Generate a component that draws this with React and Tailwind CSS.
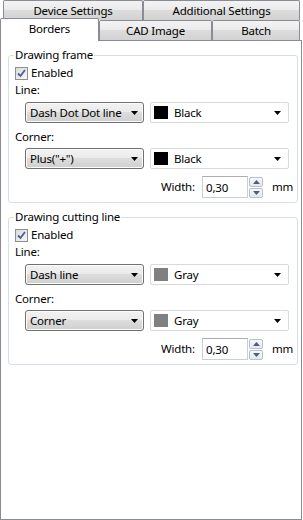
import React from "react";

const font = { fontFamily: '"Noto Sans", "Open Sans", Arial, sans-serif', letterSpacing: "-0.2px" };

function Tab({ label, w, selected }) {
  if (selected) {
    return (
      <div
        className={`relative z-10 -mt-[2px] h-[23px] shrink-0 border-x border-t border-[#898c95] bg-white flex items-start justify-center pt-[1px] text-[11.5px] text-black rounded-t-[2px]`}
        style={{ width: w }}
      >
        {label}
      </div>
    );
  }
  return (
    <div
      className="h-[20px] shrink-0 border-x border-t border-[#898c95] bg-[linear-gradient(#f3f3f3,#ebebeb_45%,#dcdcdc_50%,#d2d2d2)] flex items-center justify-center text-[11.5px] text-black rounded-t-[2px]"
      style={{ width: w }}
    >
      {label}
    </div>
  );
}

function Arrow() {
  return (
    <svg width="7" height="4" viewBox="0 0 7 4" className="shrink-0">
      <path d="M0 0H7L3.5 4Z" fill="#000" />
    </svg>
  );
}

function Checkbox() {
  return (
    <div className="w-[13px] h-[13px] border border-[#8e8f8f] bg-[linear-gradient(135deg,#dcdcdc,#f6f6f6)] flex items-center justify-center">
      <svg width="9" height="9" viewBox="0 0 9 9">
        <path d="M1 4.5L3.5 7L8 1" stroke="#4a5f97" strokeWidth="1.8" fill="none" />
      </svg>
    </div>
  );
}

function ButtonCombo({ text }) {
  return (
    <div className="w-[119px] h-[21px] shrink-0 border border-[#707070] rounded-[3px] bg-[linear-gradient(#f2f2f2,#ebebeb_45%,#dddddd_50%,#cfcfcf)] flex items-center pl-[4px] pr-[5px] shadow-[inset_0_0_0_1px_#fcfcfc]">
      <span className="flex-1 text-[11.5px] text-black leading-none whitespace-nowrap">{text}</span>
      <Arrow />
    </div>
  );
}

function ColorCombo({ color, text }) {
  return (
    <div className="w-[139px] h-[21px] shrink-0 border border-[#d9d9d9] rounded-[2px] bg-white flex items-center pl-[3px] pr-[7px]">
      <div className="w-[14px] h-[13px] shrink-0" style={{ background: color }} />
      <span className="flex-1 pl-[6px] text-[11.5px] text-black leading-none">{text}</span>
      <Arrow />
    </div>
  );
}

function SpinArrow({ up }) {
  return (
    <svg width="7" height="4" viewBox="0 0 7 4">
      <path d={up ? "M0 4H7L3.5 0Z" : "M0 0H7L3.5 4Z"} fill="#4b5e80" />
    </svg>
  );
}

function WidthRow() {
  return (
    <div className="flex items-center h-[22px] pl-[152px]">
      <span className="text-[11.5px] text-black w-[35px]">Width:</span>
      <div className="ml-[6px] w-[46px] h-[22px] border border-[#c9ced6] border-t-[#abadb3] bg-white flex items-center pl-[3px] pt-[2px] text-[11.5px] text-black">
        0,30
      </div>
      <div className="ml-[1px] flex flex-col gap-[1px]">
        <div className="w-[14px] h-[10px] border border-[#b7c0cf] rounded-[2px] bg-[linear-gradient(#f7f8fa,#e4e8ee)] flex items-center justify-center">
          <SpinArrow up />
        </div>
        <div className="w-[14px] h-[10px] border border-[#b7c0cf] rounded-[2px] bg-[linear-gradient(#f7f8fa,#e4e8ee)] flex items-center justify-center">
          <SpinArrow />
        </div>
      </div>
      <span className="ml-[9px] text-[11.5px] text-black">mm</span>
    </div>
  );
}

function Group({ title, lineText, lineColor, lineColorName, cornerText }) {
  return (
    <div className="relative w-[290px] h-[148px] border border-[#d5dfe5] rounded-[3px] ml-[7px]">
      <div className="absolute left-[5px] -top-[9px] bg-white px-[1px] text-[11.5px] text-black leading-[16px]">
        {title}
      </div>
      <div className="pt-[9px] pl-[6px] flex items-center gap-[3px] h-[25px]">
        <Checkbox />
        <span className="text-[11.5px] text-black">Enabled</span>
      </div>
      <div className="pl-[6px] h-[17px] flex items-center text-[11.5px] text-black">Line:</div>
      <div className="pl-[16px] pt-[4px] flex gap-[6px]">
        <ButtonCombo text={lineText} />
        <ColorCombo color={lineColor} text={lineColorName} />
      </div>
      <div className="pl-[6px] h-[25px] pt-[3px] flex items-center text-[11.5px] text-black">Corner:</div>
      <div className="pl-[16px] flex gap-[6px]">
        <ButtonCombo text={cornerText} />
        <ColorCombo color={lineColor} text={lineColorName} />
      </div>
      <div className="pt-[7px]">
        <WidthRow />
      </div>
    </div>
  );
}

export default function App() {
  return (
    <div className="w-[303px] h-[520px] bg-white overflow-hidden" style={font}>
      <div className="flex pl-[3px] h-[20px]">
        <Tab label="Device Settings" w={140} />
        <Tab label="Additional Settings" w={157} />
      </div>
      <div className="flex h-[20px] items-start">
        <Tab label="Borders" w={99} selected />
        <Tab label="CAD Image" w={113} />
        <Tab label="Batch" w={88} />
      </div>
      <div className="w-[302px] h-[480px] border border-[#898c95] bg-white pt-[14px]">
        <Group
          title="Drawing frame"
          lineText="Dash Dot Dot line"
          lineColor="#000000"
          lineColorName="Black"
          cornerText={'Plus("+")'}
        />
        <div className="h-[14px]" />
        <Group
          title="Drawing cutting line"
          lineText="Dash line"
          lineColor="#808080"
          lineColorName="Gray"
          cornerText="Corner"
        />
      </div>
    </div>
  );
}
